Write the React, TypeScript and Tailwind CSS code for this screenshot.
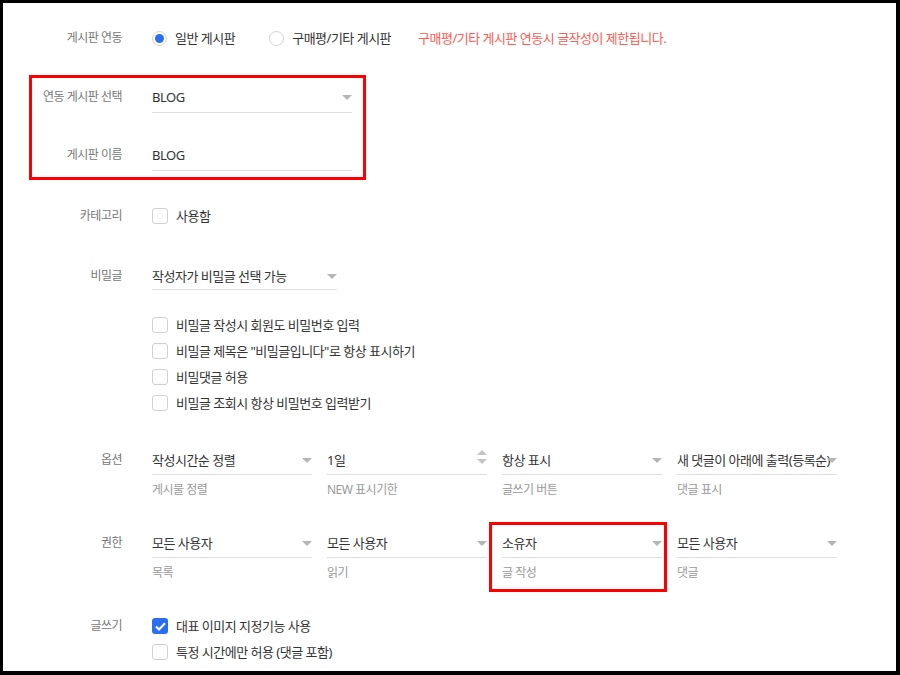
import React from 'react';

const Arrow: React.FC = () => (
  <svg width="10" height="5" viewBox="0 0 10 5" className="block">
    <polygon points="0,0 10,0 5,5" fill="#b5b5b5" />
  </svg>
);

const Spinner: React.FC = () => (
  <svg width="10" height="14" viewBox="0 0 10 14" className="block">
    <polygon points="5,0 10,5 0,5" fill="#c4c4c4" />
    <polygon points="0,9 10,9 5,14" fill="#c4c4c4" />
  </svg>
);

const Label: React.FC<{ children: React.ReactNode }> = ({ children }) => (
  <div className="w-[119px] shrink-0 text-right text-[12px] leading-[20px] tracking-[-0.5px] text-[#777]">
    {children}
  </div>
);

const Radio: React.FC<{ checked?: boolean; label: string }> = ({ checked, label }) => (
  <label className="flex items-center">
    <span className="flex h-[15px] w-[15px] items-center justify-center rounded-full border border-[#d4d4d4] bg-white">
      {checked && <span className="h-[9px] w-[9px] rounded-full bg-[#2c6ef2]" />}
    </span>
    <span className="ml-[8px] text-[13px] leading-[20px] tracking-[-0.5px] text-[#333]">{label}</span>
  </label>
);

const Check: React.FC<{ checked?: boolean; label: string }> = ({ checked, label }) => (
  <label className="flex h-[26px] items-center">
    {checked ? (
      <span className="flex h-[16px] w-[16px] items-center justify-center rounded-[3px] bg-[#2c6ef2]">
        <svg width="11" height="9" viewBox="0 0 11 9">
          <path d="M1 4.5 L4 7.5 L10 1.2" stroke="#fff" strokeWidth="2" fill="none" />
        </svg>
      </span>
    ) : (
      <span className="h-[16px] w-[16px] rounded-[3px] border border-[#d0d0d0] bg-white" />
    )}
    <span className="ml-[8px] text-[13px] leading-[20px] tracking-[-0.5px] text-[#333]">{label}</span>
  </label>
);

interface SelectProps {
  value: string;
  className: string;
  helper?: string;
  spinner?: boolean;
  pad?: string;
}

const Select: React.FC<SelectProps> = ({ value, className, helper, spinner, pad = 'pb-[4px]' }) => (
  <div className={className}>
    <div className={`relative border-b border-[#ddd] ${pad}`}>
      <div className="overflow-hidden whitespace-nowrap pr-[11px] text-[13px] leading-[20px] tracking-[-0.5px] text-[#333]">
        {value}
      </div>
      <div className={`absolute right-0 ${spinner ? 'top-[0px]' : 'top-[8px]'}`}>
        {spinner ? <Spinner /> : <Arrow />}
      </div>
    </div>
    {helper && (
      <div className="mt-[6px] text-[12px] leading-[18px] tracking-[-0.5px] text-[#999]">{helper}</div>
    )}
  </div>
);

const TextField: React.FC<{ value: string }> = ({ value }) => (
  <div className="w-[200px] border-b border-[#ddd] pb-[5px] text-[13px] leading-[20px] tracking-[-0.5px] text-[#333]">
    {value}
  </div>
);

export default function App() {
  return (
    <div className="h-[675px] w-[900px] bg-black pb-[4px] pl-[3px] pr-[4px] pt-[3px] font-['Noto_Sans','Noto_Sans_CJK_KR',sans-serif]">
      <div className="h-full w-full bg-white pt-[25px]">
        {/* 게시판 연동 */}
        <div className="flex items-start">
          <Label>게시판 연동</Label>
          <div className="ml-[30px] flex items-center">
            <Radio checked label="일반 게시판" />
            <div className="ml-[34px]">
              <Radio label="구매평/기타 게시판" />
            </div>
            <span className="ml-[27px] text-[13px] leading-[20px] tracking-[-0.5px] text-[#ff5a52]">
              구매평/기타 게시판 연동시 글작성이 제한됩니다.
            </span>
          </div>
        </div>

        {/* 연동 게시판 */}
        <div className="relative mt-[39px]">
          <div className="flex items-start">
            <Label>연동 게시판 선택</Label>
            <div className="ml-[30px]">
              <Select value="BLOG" className="w-[200px]" pad="pb-[5px]" />
            </div>
          </div>
          <div className="mt-[32px] flex items-start">
            <Label>게시판 이름</Label>
            <div className="ml-[30px]">
              <TextField value="BLOG" />
            </div>
          </div>
          <div className="pointer-events-none absolute -bottom-[9px] -top-[12px] left-[26px] w-[337px] border-[3px] border-[#ff0000]" />
        </div>

        {/* 카테고리 */}
        <div className="mt-[32px] flex items-center">
          <Label>카테고리</Label>
          <div className="ml-[30px]">
            <Check label="사용함" />
          </div>
        </div>

        {/* 비밀글 */}
        <div className="mt-[37px] flex items-start">
          <Label>비밀글</Label>
          <div className="ml-[30px]">
            <Select value="작성자가 비밀글 선택 가능" className="w-[185px]" pad="pb-[3px]" />
            <div className="mt-[22px]">
              <Check label="비밀글 작성시 회원도 비밀번호 입력" />
              <Check label={'비밀글 제목은 "비밀글입니다"로 항상 표시하기'} />
              <Check label="비밀댓글 허용" />
              <Check label="비밀글 조회시 항상 비밀번호 입력받기" />
            </div>
          </div>
        </div>

        {/* 옵션 */}
        <div className="mt-[34px] flex items-start">
          <Label>옵션</Label>
          <div className="ml-[30px] flex gap-[15px]">
            <Select value="작성시간순 정렬" helper="게시물 정렬" className="w-[160px]" />
            <Select value="1일" helper="NEW 표시기한" className="w-[160px]" spinner />
            <Select value="항상 표시" helper="글쓰기 버튼" className="w-[160px]" />
            <Select value="새 댓글이 아래에 출력(등록순)" helper="댓글 표시" className="w-[160px]" />
          </div>
        </div>

        {/* 권한 */}
        <div className="mt-[34px] flex items-start">
          <Label>권한</Label>
          <div className="ml-[30px] flex gap-[15px]">
            <Select value="모든 사용자" helper="목록" className="w-[160px]" />
            <Select value="모든 사용자" helper="읽기" className="w-[160px]" />
            <div className="relative w-[160px]">
              <Select value="소유자" helper="글 작성" className="w-[160px]" />
              <div className="pointer-events-none absolute -bottom-[10px] -left-[13px] -right-[5px] -top-[11px] border-[3px] border-[#ff0000]" />
            </div>
            <Select value="모든 사용자" helper="댓글" className="w-[160px]" />
          </div>
        </div>

        {/* 글쓰기 */}
        <div className="mt-[31px] flex items-start">
          <div className="pt-[3px]">
            <Label>글쓰기</Label>
          </div>
          <div className="ml-[30px]">
            <Check checked label="대표 이미지 지정기능 사용" />
            <Check label="특정 시간에만 허용 (댓글 포함)" />
          </div>
        </div>
      </div>
    </div>
  );
}
